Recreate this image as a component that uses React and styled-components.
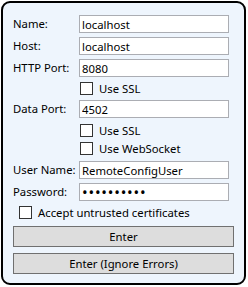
import React, { useState } from 'react';
import styled, { createGlobalStyle } from 'styled-components';

const GlobalStyle = createGlobalStyle`
  html, body {
    margin: 0;
    padding: 0;
    background: #ffffff;
  }
  body {
    font-family: "Noto Sans", "Open Sans", sans-serif;
    font-size: 11.3px;
    color: #000;
  }
`;

const Panel = styled.div`
  box-sizing: border-box;
  margin: 1px;
  width: 245px;
  height: 284px;
  border: 2px solid #000;
  border-radius: 9px;
  background: #eef5fd;
  padding: 12px 10px 0 10px;
  display: flex;
  flex-direction: column;
`;

const FieldRow = styled.div`
  display: flex;
  align-items: center;
  height: 18px;
  margin-bottom: ${(props) => props.$gap ?? 4}px;
`;

const Label = styled.label`
  width: 66px;
  flex: none;
  white-space: nowrap;
  line-height: 18px;
`;

const TextBox = styled.input`
  box-sizing: border-box;
  width: 150px;
  height: 18px;
  margin: 0;
  padding: 0 2px;
  border: 1px solid #abadb3;
  background: #fff;
  font-family: inherit;
  font-size: 11.3px;
  color: #000;
  outline: none;
`;

const PasswordBox = styled(TextBox)`
  font-size: 15px;
  letter-spacing: 0.8px;
  padding: 0 1px 1px 2px;
`;

const CheckRow = styled.label`
  display: flex;
  align-items: center;
  gap: 6px;
  height: 13px;
  margin-left: ${(props) => props.$indent}px;
  margin-top: ${(props) => props.$top}px;
  margin-bottom: ${(props) => props.$bottom}px;
  white-space: nowrap;
`;

const Box = styled.span`
  box-sizing: border-box;
  width: 13px;
  height: 13px;
  flex: none;
  border: 1px solid #333;
  background: #fff;
`;

const Button = styled.button`
  box-sizing: border-box;
  width: 221px;
  height: 21px;
  margin: 0 0 ${(props) => props.$bottom}px 0;
  padding: 0;
  border: 1px solid #707070;
  background: #dddddd;
  font-family: inherit;
  font-size: 11.3px;
  color: #000;
  cursor: pointer;
`;

const Check = ({ label, indent, top, bottom }) => (
  <CheckRow $indent={indent} $top={top} $bottom={bottom}>
    <Box />
    <span>{label}</span>
  </CheckRow>
);

const App = () => {
  const [form, setForm] = useState({
    name: 'localhost',
    host: 'localhost',
    httpPort: '8080',
    dataPort: '4502',
    user: 'RemoteConfigUser',
    password: 'abcdefghij',
  });

  const change = (key) => (e) => setForm({ ...form, [key]: e.target.value });

  return (
    <>
      <GlobalStyle />
      <Panel>
        <FieldRow>
          <Label>Name:</Label>
          <TextBox value={form.name} onChange={change('name')} />
        </FieldRow>
        <FieldRow>
          <Label>Host:</Label>
          <TextBox value={form.host} onChange={change('host')} />
        </FieldRow>
        <FieldRow $gap={0}>
          <Label>HTTP Port:</Label>
          <TextBox value={form.httpPort} onChange={change('httpPort')} />
        </FieldRow>
        <Check label="Use SSL" indent={67} top={5} bottom={5} />
        <FieldRow $gap={0}>
          <Label>Data Port:</Label>
          <TextBox value={form.dataPort} onChange={change('dataPort')} />
        </FieldRow>
        <Check label="Use SSL" indent={67} top={6} bottom={0} />
        <Check label="Use WebSocket" indent={67} top={5} bottom={6} />
        <FieldRow>
          <Label>User Name:</Label>
          <TextBox value={form.user} onChange={change('user')} />
        </FieldRow>
        <FieldRow $gap={0}>
          <Label>Password:</Label>
          <PasswordBox type="password" value={form.password} onChange={change('password')} />
        </FieldRow>
        <Check label="Accept untrusted certificates" indent={6} top={5} bottom={7} />
        <Button $bottom={6}>Enter</Button>
        <Button $bottom={0}>Enter (Ignore Errors)</Button>
      </Panel>
    </>
  );
};

export default App;
